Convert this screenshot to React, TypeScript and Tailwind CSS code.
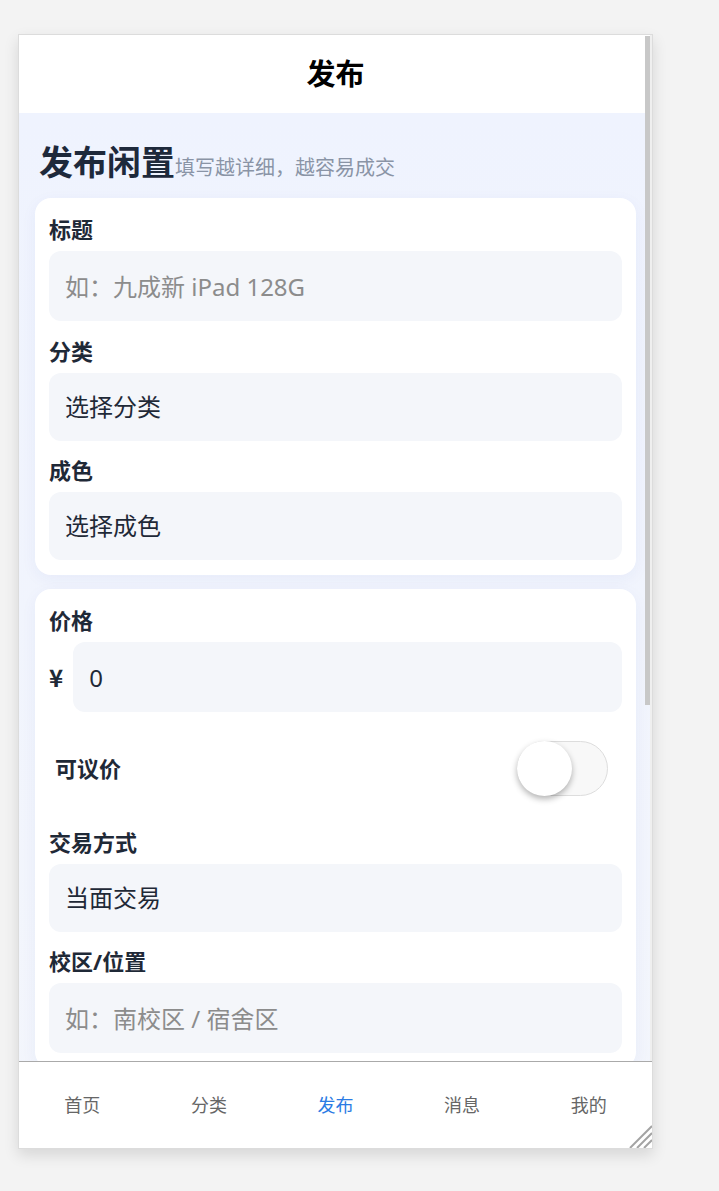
import React from "react";

function Label({ children, className = "" }: { children: React.ReactNode; className?: string }) {
  return <div className={`text-[22px] font-bold leading-8 text-[#1f2937] ${className}`}>{children}</div>;
}

function TextField({ label, placeholder }: { label: string; placeholder: string }) {
  return (
    <div className="flex flex-col">
      <Label>{label}</Label>
      <input
        className="mt-1.5 h-[70px] w-full rounded-xl bg-[#f4f6fa] px-4 text-[24px] text-[#1f2937] outline-none placeholder:text-[#8c8c8c]"
        placeholder={placeholder}
      />
    </div>
  );
}

function SelectField({ label, value }: { label: string; value: string }) {
  return (
    <div className="flex flex-col">
      <Label>{label}</Label>
      <div className="mt-1.5 flex h-[68px] items-center rounded-xl bg-[#f4f6fa] px-4 text-[24px] text-[#1f2937]">
        {value}
      </div>
    </div>
  );
}

export default function App() {
  const tabs = ["首页", "分类", "发布", "消息", "我的"];
  return (
    <div className="min-h-screen bg-[#f3f3f3] pl-[18px] pt-[34px] font-['Noto_Sans','Noto_Sans_CJK_SC',sans-serif]">
      <div className="relative flex h-[1115px] w-[635px] flex-col overflow-hidden border border-[#dcdcdc] bg-white shadow-[0_6px_14px_rgba(0,0,0,0.12)]">
        <div className="relative min-h-0 flex-1">
          <div className="h-full overflow-y-auto [scrollbar-width:none]">
            <header className="flex h-[78px] items-center justify-center bg-white text-[29px] font-bold text-black">
              发布
            </header>
            <main className="bg-linear-to-b from-[#eff3fe] to-[#f5f7fb] px-4 pb-[86px] pt-[25px]">
              <div className="mb-3 flex items-baseline pl-1">
                <h1 className="text-[34px] font-bold leading-[48px] text-[#1e293b]">发布闲置</h1>
                <span className="text-[20px] text-[#8a94a6]">填写越详细，越容易成交</span>
              </div>

              <section className="flex flex-col gap-[13.5px] rounded-2xl bg-white px-[14px] py-[15px] shadow-[0_4px_16px_rgba(30,64,175,0.05)]">
                <TextField label="标题" placeholder="如：九成新 iPad 128G" />
                <SelectField label="分类" value="选择分类" />
                <SelectField label="成色" value="选择成色" />
              </section>

              <section className="mt-[14px] flex flex-col rounded-2xl bg-white px-[14px] py-[15px] shadow-[0_4px_16px_rgba(30,64,175,0.05)]">
                <div className="flex flex-col">
                  <Label>价格</Label>
                  <div className="mt-1.5 flex items-center gap-[10px]">
                    <span className="font-['Noto_Sans_CJK_SC',sans-serif] text-[24px] font-bold text-[#1f2937]">¥</span>
                    <input
                      className="h-[70px] min-w-0 flex-1 rounded-xl bg-[#f4f6fa] px-4 text-[24px] text-[#1f2937] outline-none"
                      defaultValue="0"
                    />
                  </div>
                </div>

                <div className="mb-[30px] mt-[29px] flex items-center justify-between pl-[6px] pr-[14px]">
                  <span className="text-[22px] font-bold text-[#1f2937]">可议价</span>
                  <div className="relative h-[55px] w-[91px] rounded-full border-[1.5px] border-[#dddddd] bg-[#f8f8f8]">
                    <div className="absolute left-[-1.5px] top-[-1.5px] h-[55px] w-[55px] rounded-full bg-white shadow-[0_3px_6px_rgba(0,0,0,0.3)]" />
                  </div>
                </div>

                <div className="flex flex-col gap-[13px]">
                  <SelectField label="交易方式" value="当面交易" />
                  <TextField label="校区/位置" placeholder="如：南校区 / 宿舍区" />
                </div>
              </section>

              <section className="mt-[14px] flex flex-col gap-[13px] rounded-2xl bg-white px-[14px] py-[15px] shadow-[0_4px_16px_rgba(30,64,175,0.05)]">
                <div className="flex flex-col">
                  <Label>描述</Label>
                  <textarea
                    className="mt-1.5 h-[150px] w-full resize-none rounded-xl bg-[#f4f6fa] px-4 py-3 text-[24px] text-[#1f2937] outline-none placeholder:text-[#8c8c8c]"
                    placeholder="说说物品的来源、使用情况等"
                  />
                </div>
                <div className="flex flex-col">
                  <Label>图片</Label>
                  <div className="mt-1.5 flex h-[100px] w-[100px] items-center justify-center rounded-xl bg-[#f4f6fa] text-[40px] text-[#9ca3af]">
                    +
                  </div>
                </div>
              </section>

              <button className="mt-4 h-[56px] w-full rounded-2xl bg-[#2b7be4] text-[22px] font-bold text-white">
                发布
              </button>
            </main>
          </div>
          {/* overlay scrollbar */}
          <div className="pointer-events-none absolute bottom-0 right-0 top-0 w-[2px] bg-[#efefef]" />
          <div className="pointer-events-none absolute right-[2px] top-[1px] h-[669px] w-[5px] bg-[#c8c8c8]" />
        </div>
        <nav className="flex h-[87px] shrink-0 border-t border-[#aaaaaa] bg-white">
          {tabs.map((t) => (
            <div
              key={t}
              className={`flex flex-1 items-center justify-center text-[18px] ${t === "发布" ? "text-[#2b7be4]" : "text-[#666666]"}`}
            >
              {t}
            </div>
          ))}
        </nav>
        {/* resize grip */}
        <svg
          className="pointer-events-none absolute bottom-0 right-0"
          width="23"
          height="23"
          viewBox="0 0 23 23"
          aria-hidden="true"
        >
          <g stroke="#a3a3a3" strokeWidth="2">
            <line x1="1" y1="23" x2="23" y2="1" />
            <line x1="8" y1="23" x2="23" y2="8" />
            <line x1="15" y1="23" x2="23" y2="15" />
          </g>
        </svg>
      </div>
    </div>
  );
}
